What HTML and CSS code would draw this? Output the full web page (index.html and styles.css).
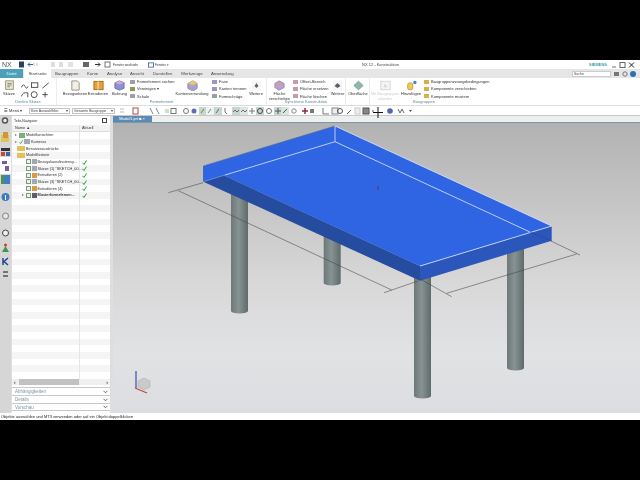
FILE: index.html
```html
<!DOCTYPE html>
<html lang="de">
<head>
    <meta charset="UTF-8" />
    <title>NX 12 - Konstruktion</title>
    <link rel="stylesheet" href="styles.css">
</head>
<body>
    <svg class="defs" width="0" height="0">
        <symbol id="ok" viewBox="0 0 5 5"><path d="M.5 2.800l1.500 1.700 2.500-4" fill="none" stroke="#2f9a3f" stroke-width="1"/></symbol>
        <symbol id="chev" viewBox="0 0 5 4"><path d="M.5 .8l2 2 2-2" fill="none" stroke="#444" stroke-width=".8"/></symbol>
    </svg>
    <div class="app">
        <!-- Titelleiste -->
        <div class="titlebar">
            <span class="nx">NX</span>
            <svg class="quick" width="92" height="9" viewBox="0 0 92 9">
                <rect x="0" y="1.500" width="5" height="6" fill="#2b3f66"/>
                <path d="M9 4.500h5M9 4.500l2-2M9 4.500l2 2" stroke="#35618f" fill="none"/>
                <path d="M15 3v3M18 3v3" stroke="#bbb"/>
                <rect x="32" y="2" width="4" height="5" fill="#dedede"/>
                <rect x="40" y="2" width="4" height="5" fill="#dedede"/>
                <rect x="49" y="2" width="5" height="5" fill="#e2e2e2"/>
                <rect x="64" y="2" width="6" height="5" fill="#666"/>
                <path d="M76 4.500h5M79 2.500l2 2-2 2" stroke="#333" fill="none"/>
                <rect x="86" y="2" width="5" height="5" fill="#fff" stroke="#555" stroke-width=".8"/>
            </svg>
            <span class="title-link switch">Fenster wechseln</span>
            <svg class="win-ico" width="6" height="6" viewBox="0 0 7 7"><rect x=".5" y="1" width="6" height="5" fill="#fff" stroke="#3a6ea5"/></svg>
            <span class="title-link">Fenster ▾</span>
            <span class="app-title">NX 12 - Konstruktion</span>
            <span class="siemens">SIEMENS</span>
            <svg class="win-btns" width="26" height="8" viewBox="0 0 26 8">
                <path d="M1 6h4" stroke="#777"/>
                <rect x="9" y="1.500" width="5" height="5" fill="none" stroke="#666"/>
                <path d="M18 1.500l5 5M23 1.500l-5 5" stroke="#222"/>
            </svg>
        </div>

        <!-- Registerkarten -->
        <div class="tabs">
            <span class="tab tab-file">Datei</span>
            <span class="tab tab-active">Startseite</span>
            <span class="tab tab-a">Baugruppen</span>
            <span class="tab tab-b">Kurve</span>
            <span class="tab tab-c">Analyse</span>
            <span class="tab tab-d">Ansicht</span>
            <span class="tab tab-e">Darstellen</span>
            <span class="tab tab-f">Werkzeuge</span>
            <span class="tab tab-g">Anwendung</span>
            <span class="search">Suche</span>
            <svg class="tab-icons" width="26" height="8" viewBox="0 0 26 8">
                <rect x="1" y="2" width="5" height="4" fill="#777"/>
                <circle cx="12" cy="4" r="2.200" fill="none" stroke="#777"/>
                <circle cx="20" cy="4" r="3" fill="#2f6fb5"/>
            </svg>
        </div>

        <!-- Ribbon -->
        <div class="ribbon">
            <div class="group g-sketch">
                <div class="group-body">
                    <div class="big big-sketch">
                        <svg viewBox="0 0 13 13"><rect x="2" y="1" width="9" height="10" fill="#efe9c9" stroke="#8a8a6a"/><path d="M4 4h5M4 6h5M4 8h3" stroke="#6a7a8a"/></svg>
                        <span>Skizze</span>
                    </div>
                    <svg class="sketch-tools" width="32" height="20" viewBox="0 0 34 22">
                        <path d="M1 7q2-5 4-1t3 0" fill="none" stroke="#444"/>
                        <rect x="12" y="2" width="7" height="5" fill="none" stroke="#444"/>
                        <path d="M24 8l7-6" stroke="#444"/>
                        <path d="M1 17q1-5 7-4v5" fill="none" stroke="#444"/>
                        <circle cx="15" cy="15" r="3.300" fill="none" stroke="#444"/>
                        <path d="M27 12v6M24 15h6" stroke="#444"/>
                    </svg>
                </div>
                <div class="group-name">Direkte Skizze</div>
            </div>

            <div class="group g-feature">
                <div class="group-body">
                    <div class="big w-plane">
                        <svg viewBox="0 0 12 12"><path d="M2 1h6l2 2v8H2z" fill="#f4efe2" stroke="#8d8d8d"/></svg>
                        <span>Bezugsebene</span>
                    </div>
                    <div class="big w-extrude">
                        <svg viewBox="0 0 12 12"><rect x="1" y="1.500" width="10" height="9" fill="#e5a23c" stroke="#a86a16"/><path d="M5.500 1.500v9" stroke="#fff0c8"/></svg>
                        <span>Extrudieren</span>
                    </div>
                    <div class="big w-hole">
                        <svg viewBox="0 0 12 12"><path d="M1 3l5-2 5 2v6l-5 2-5-2z" fill="#8f8fd6" stroke="#6c6ca8"/><path d="M1 3l5 2 5-2-5-2z" fill="#d7a7c7"/></svg>
                        <span>Bohrung</span>
                    </div>
                    <ul class="list l-feature">
                        <li><i class="dot c-gray"></i>Formelement suchen</li>
                        <li><i class="dot c-olive"></i>Vereinigen ▾</li>
                        <li><i class="dot c-gray"></i>Schale</li>
                    </ul>
                    <div class="big w-blend">
                        <svg viewBox="0 0 13 13"><path d="M1 4l6-3 5 3v6l-5 3-6-3z" fill="#a7a2cf" stroke="#8c88aa"/><path d="M1 4l6 2 5-2-5-3z" fill="#f1c85c"/></svg>
                        <span>Kantenverrundung</span>
                    </div>
                    <ul class="list l-edge">
                        <li><i class="dot c-violet"></i>Fase</li>
                        <li><i class="dot c-violet"></i>Kanten trennen</li>
                        <li><i class="dot c-gray"></i>Formschräge</li>
                    </ul>
                    <div class="big w-more">
                        <svg viewBox="0 0 10 11"><rect x=".5" y=".5" width="9" height="10" fill="#f6f6f6"/><path d="M3 6l2-3 2 3-2 2z" fill="#5a6a7a"/></svg>
                        <span>Weitere</span>
                    </div>
                </div>
                <div class="group-name">Formelement</div>
            </div>

            <div class="group g-sync">
                <div class="group-body">
                    <div class="big w-move">
                        <svg viewBox="0 0 13 13"><path d="M1 4l5-3 6 3v5l-6 3-5-3z" fill="#b6a0d8" stroke="#9a86bc"/><path d="M3 5l3-2 3 2-3 2z" fill="#e8a24a"/></svg>
                        <span>Fläche<br>verschieben</span>
                    </div>
                    <ul class="list l-sync">
                        <li><i class="dot c-rose"></i>Offset-Bereich</li>
                        <li><i class="dot c-rose"></i>Fläche ersetzen</li>
                        <li><i class="dot c-rose"></i>Fläche löschen</li>
                    </ul>
                    <div class="big w-more2">
                        <svg viewBox="0 0 10 11"><rect x=".5" y=".5" width="9" height="10" fill="#f6f6f6"/><path d="M2 6l3-3 3 3-3 2z" fill="#5a5a6a"/></svg>
                        <span>Weitere</span>
                    </div>
                </div>
                <div class="group-name">Synchrone Konstruktion</div>
            </div>

            <div class="group g-surface">
                <div class="group-body">
                    <div class="big w-surface">
                        <svg viewBox="0 0 13 12"><path d="M6.500 1l5.500 5-5.500 5L1 6z" fill="#8fb8a6" stroke="#7a9d8e"/></svg>
                        <span>Oberfläche</span>
                    </div>
                </div>
            </div>

            <div class="group g-assy">
                <div class="group-body">
                    <div class="big w-work">
                        <svg viewBox="0 0 13 12"><rect x="1" y="1" width="11" height="10" fill="#f4f4f4" stroke="#d2d2d2"/><path d="M4 8l2-4 3 4z" fill="#d8d8d8"/></svg>
                        <span class="disabled">Mit Baugruppen<br>arbeiten</span>
                    </div>
                    <div class="big w-add">
                        <svg viewBox="0 0 13 12"><rect x="2" y="3" width="6" height="8" rx="2" fill="#efc95c" stroke="#bb9a36"/><circle cx="10.500" cy="2.500" r="2" fill="#4a7fd0"/></svg>
                        <span>Hinzufügen</span>
                    </div>
                    <ul class="list l-assy">
                        <li><i class="dot c-gold"></i>Baugruppenzwangsbedingungen</li>
                        <li><i class="dot c-gold"></i>Komponente verschieben</li>
                        <li><i class="dot c-gold"></i>Komponente mustern</li>
                    </ul>
                </div>
                <div class="group-name name-assy">Baugruppen</div>
            </div>
        </div>

        <!-- Auswahlleiste -->
        <div class="toolbar">
            <span class="menu">☰ Menü ▾</span>
            <span class="select sel-filter">Kein Auswahlfilter <b>▾</b></span>
            <span class="select sel-scope">Gesamte Baugruppe <b>▾</b></span>
            <svg class="tool-strip" width="300" height="10" viewBox="116 105 300 10">
                <path d="M120 108h4M120 111h4" stroke="#bbb"/>
                <rect x="133" y="107" width="5" height="6" fill="#fff" stroke="#b04a4a"/>
                <path d="M150 107l3 6M156 107l3 6" stroke="#888"/>
                <rect x="165" y="108" width="4" height="4" fill="#cfe0c8"/>
                <rect x="171" y="107.500" width="5" height="5" fill="none" stroke="#777"/>
                <circle cx="186" cy="110" r="2.500" fill="none" stroke="#777"/>
                <circle cx="194" cy="110" r="2.500" fill="#5d6fb0"/>
                <rect x="199" y="106" width="7" height="8" fill="#c8d6ce"/>
                <path d="M201 112l3-4" stroke="#6a8a3a"/>
                <rect x="206" y="106" width="8" height="8" fill="#eef2ee"/>
                <path d="M208 112l3-4" stroke="#888"/>
                <rect x="214" y="106" width="8" height="8" fill="#c8d6ce"/>
                <path d="M216 112l3-4" stroke="#4a6a9a"/>
                <path d="M225 107v4l2 2" fill="none" stroke="#777"/>
                <rect x="232" y="106" width="8" height="8" fill="#c8d6ce"/>
                <rect x="240" y="106" width="8" height="8" fill="#dde6e0"/>
                <path d="M233 111l2-2 2 2 2-2M241 111l2-2 2 2 2-2" stroke="#667" fill="none"/>
                <path d="M252 107v6M249 110h6" stroke="#777"/>
                <rect x="256" y="106" width="8" height="8" fill="#c8d6ce"/>
                <circle cx="260" cy="110" r="2.500" fill="none" stroke="#444"/>
                <circle cx="269" cy="110" r="2.500" fill="none" stroke="#777"/>
                <rect x="274" y="106" width="8" height="8" fill="#c8d6ce"/>
                <path d="M278 107v6M275 110h6" stroke="#556"/>
                <rect x="281" y="106" width="8" height="8" fill="#d8e4dc"/>
                <path d="M283 112l4-4" stroke="#3d6f45"/>
                <circle cx="294" cy="110" r="2.200" fill="none" stroke="#888"/>
                <path d="M302 110h6M305 107v6" stroke="#8a2f4a" stroke-width="1.500"/>
                <rect x="310" y="108" width="4" height="4" fill="#777"/>
                <path d="M323 107v6h6" fill="none" stroke="#777"/>
                <rect x="332" y="107" width="6" height="6" fill="#eee" stroke="#888"/>
                <circle cx="340" cy="110" r="2.500" fill="none" stroke="#555"/>
                <path d="M347 113l4-4" stroke="#555"/>
                <rect x="355" y="107" width="5" height="6" fill="#eee" stroke="#ccc"/>
                <rect x="363" y="107" width="6" height="6" fill="#88888a" stroke="#555"/>
                <path d="M372 110h2" stroke="#555"/>
                <circle cx="390" cy="110" r="2.800" fill="#5668a8"/>
                <path d="M398 108l2 4 2-4 2 4" fill="none" stroke="#666"/>
                <path d="M409 109h3l-1.500 2z" fill="#555"/>
            </svg>
            <svg class="cursor" width="12" height="11" viewBox="0 0 12 11"><path d="M6 0v11M1 5.500h10" stroke="#111"/></svg>
        </div>

        <div class="main">
            <!-- Ressourcenleiste -->
            <div class="strip">
                <svg width="11" height="297" viewBox="0 0 11 297">
                    <circle cx="5" cy="4.500" r="2.500" fill="#eee" stroke="#555" stroke-width="1.500"/>
                    <rect x="1" y="19" width="8" height="7" fill="#e4c25a"/><rect x="3" y="16" width="5" height="6" fill="#c99a2f"/>
                    <rect x="1" y="32" width="9" height="3" fill="#333"/><rect x="1" y="36" width="4" height="4" fill="#c94a3a"/><rect x="6" y="36" width="4" height="4" fill="#4a5ea8"/>
                    <rect x="0" y="41" width="11" height="17" fill="#fff"/>
                    <path d="M2 45h5v3H2zM5 50h4v5H5z" fill="#7a5aa0"/>
                    <rect x="1" y="59" width="9" height="9" fill="#4f8f5c"/><rect x="4" y="59" width="6" height="9" fill="#3f7fc0"/>
                    <circle cx="5.500" cy="81" r="4" fill="#3c7cc4"/><path d="M5.500 79v5" stroke="#fff"/>
                    <circle cx="5.500" cy="100" r="3" fill="#dfe6ea" stroke="#888"/>
                    <circle cx="5.500" cy="117" r="3" fill="#eee" stroke="#444"/>
                    <path d="M2 136l3.500-6 3.500 6z" fill="#3e9a4a"/><circle cx="5.500" cy="129" r="1.500" fill="#d63a3a"/>
                    <path d="M3 142v7M8 142l-4 3.500 4 3.500" fill="none" stroke="#23468f" stroke-width="1.500"/>
                    <path d="M3 156h5M8 160H3" stroke="#555" stroke-width="1.500"/>
                </svg>
            </div>

            <!-- Teile-Navigator -->
            <div class="panel">
                <div class="panel-head">
                    <span>Teile-Navigator</span>
                    <svg width="5" height="5" viewBox="0 0 5 5"><rect x=".5" y=".5" width="4" height="4" fill="none" stroke="#444"/></svg>
                </div>
                <div class="cols">
                    <span class="col-name">Name ▲</span>
                    <span class="col-cur">Aktuell</span>
                </div>
                <div class="tree">
                    <div class="row lv1"><i class="arrow"></i><i class="node n-green"></i>Modellansichten</div>
                    <div class="row lv1"><i class="arrow"></i><svg class="tick"><use href="#ok"/></svg><i class="node n-gray"></i>Kameras</div>
                    <div class="row lv0"><i class="node n-folder"></i>Benutzerausdrücke</div>
                    <div class="row lv0"><i class="node n-folder"></i>Modellhistorie</div>
                    <div class="row lv2"><i class="node n-check"></i><i class="node n-gray"></i>Bezugskoordinatensy...<svg class="ok"><use href="#ok"/></svg></div>
                    <div class="row lv2"><i class="node n-check"></i><i class="node n-gray"></i>Skizze (1) "SKETCH_00...<svg class="ok"><use href="#ok"/></svg></div>
                    <div class="row lv2"><i class="node n-check"></i><i class="node n-orange"></i>Extrudieren (2)<svg class="ok"><use href="#ok"/></svg></div>
                    <div class="row lv2"><i class="node n-check"></i><i class="node n-gray"></i>Skizze (3) "SKETCH_00...<svg class="ok"><use href="#ok"/></svg></div>
                    <div class="row lv2"><i class="node n-check"></i><i class="node n-orange"></i>Extrudieren (4)<svg class="ok"><use href="#ok"/></svg></div>
                    <div class="row lv3 bold"><i class="arrow"></i><i class="node n-check"></i><i class="node n-dark"></i>Musterformelemen...<svg class="ok"><use href="#ok"/></svg></div>
                </div>
                <div class="hscroll"><b>‹</b><span class="thumb"></span><b>›</b></div>
                <div class="fold">Abhängigkeiten<svg class="chev"><use href="#chev"/></svg></div>
                <div class="fold">Details<svg class="chev"><use href="#chev"/></svg></div>
                <div class="fold fold-last">Vorschau<svg class="chev"><use href="#chev"/></svg></div>
            </div>

            <!-- Grafikfenster -->
            <div class="view">
                <div class="view-tabs"><span class="view-tab">Model1.prt ■ ×</span></div>
                <svg class="scene" width="527" height="290" viewBox="113 123 527 290">
                    <defs>
                        <linearGradient id="bg" x1="0" y1="0" x2="0" y2="1">
                            <stop offset="0" stop-color="#b2b2b2"/>
                            <stop offset=".55" stop-color="#d8d8d9"/>
                            <stop offset=".8" stop-color="#e1e2e4"/>
                            <stop offset="1" stop-color="#dcdde0"/>
                        </linearGradient>
                        <linearGradient id="leg" x1="0" y1="0" x2="1" y2="0">
                            <stop offset="0" stop-color="#6e7878"/>
                            <stop offset=".45" stop-color="#879292"/>
                            <stop offset="1" stop-color="#5f6a6a"/>
                        </linearGradient>
                    </defs>
                    <rect x="113" y="123" width="527" height="290" fill="url(#bg)"/>

                    <!-- Beine -->
                    <path d="M231 190h17v121a8.500 2.500 0 0 1-17 0z" fill="url(#leg)"/>
                    <path d="M323.700 230h17v53a8.500 2.500 0 0 1-17 0z" fill="url(#leg)"/>
                    <path d="M414 275h17v121a8.500 2.500 0 0 1-17 0z" fill="url(#leg)"/>
                    <path d="M507 235h17v133a8.500 2.500 0 0 1-17 0z" fill="url(#leg)"/>

                    <!-- Platte -->
                    <path d="M335 126L551.700 226L420 266L203.300 166z" fill="#2f64e2"/>
                    <path d="M203.300 166L420 266V280.700L203.300 181.700z" fill="#264c9f"/>
                    <path d="M420 266L551.700 226V240.700L420 280.700z" fill="#2b56bb"/>
                    <path d="M203.300 166V181.700L225 175L203.300 166z" fill="#2f64e2"/>
                    <path d="M335 126L203.300 166" stroke="#5b6e96" stroke-width=".7"/>
                    <path d="M335 126L551.700 226M335 126V141.700M335 141.700L225 175M335 141.700L530 232M420 266L551.700 226" stroke="#dfe7fb" stroke-width=".8" fill="none"/>
                    <path d="M203.300 181.700L225 175" stroke="#8fa8e6" stroke-width=".6"/>
                    <path d="M530 232L551.700 241" stroke="#25449a" stroke-width=".6"/>

                    <!-- Bemassung -->
                    <g stroke="#444" stroke-width=".55" fill="none">
                        <path d="M178.300 190.700L391.700 290"/>
                        <path d="M168.300 192.700L203 182.700"/>
                        <path d="M384 292.700L418 281"/>
                        <path d="M446.700 293.300L576.700 254"/>
                        <path d="M420 279L451.700 296.700"/>
                        <path d="M551 241L580 255"/>
                    </g>
                    <path d="M378 186v4" stroke="#6a2a3a" stroke-width=".8"/>

                    <!-- Koordinatensystem -->
                    <path d="M136 371V388" stroke="#3a4fb0" stroke-width="1.200"/>
                    <path d="M135 388L147 393" stroke="#c8443a" stroke-width="1.200"/>
                    <path d="M138 381l6-3 6 3v6l-6 3-6-3z" fill="#c9cbc9" stroke="#a8aba8" stroke-width=".5"/>
                </svg>
            </div>
        </div>

        <div class="status">Objekte auswählen und MT3 verwenden oder auf ein Objekt doppelklicken</div>
    </div>
</body>
</html>
```

FILE: styles.css
```css
* {
    box-sizing: border-box;
}

body {
    margin: 0;
    height: 480px;
    background-color: #000;
    font-family: "Liberation Sans", Arial, sans-serif;
    overflow: hidden;
}

svg {
    display: block;
    flex: none;
}

.defs {
    position: absolute;
}

.app {
    display: flex;
    flex-direction: column;
    height: 360px;
    margin-top: 60px;
    background-color: #fff;
    color: #333;
    font-size: 4px;
}

/* das Original ist ein unscharfes Video-Standbild */
.titlebar,
.tabs,
.ribbon,
.toolbar,
.strip,
.panel,
.status {
    filter: blur(.2px);
}

/* Titelleiste */
.titlebar {
    display: flex;
    align-items: center;
    height: 9px;
    padding-left: 2px;
    background-color: #fff;
    font-size: 3.200px;
    white-space: nowrap;
}

.nx {
    width: 15px;
    font-size: 7px;
    color: #46586a;
}

.quick {
    margin-left: 2px;
    margin-right: 2px;
}

.title-link {
    color: #333;
}

.switch {
    margin-right: 10px;
}

.win-ico {
    margin-right: 1px;
}

.app-title {
    position: absolute;
    left: 362px;
    color: #444;
    font-size: 4px;
}

.siemens {
    margin-left: auto;
    margin-right: 4px;
    font-size: 4px;
    font-weight: bold;
    color: #3b9ca5;
}

.win-btns {
    margin-right: 3px;
}

/* Registerkarten */
.tabs {
    display: flex;
    align-items: center;
    height: 9px;
    background-color: #e6e6e6;
    font-size: 4.300px;
    color: #444;
}

.tab {
    display: block;
    height: 9px;
    line-height: 9px;
    white-space: nowrap;
}

.tab-file {
    width: 23px;
    background-color: #4e9fb8;
    color: #dff;
    text-align: center;
}

.tab-active {
    width: 27px;
    margin-left: 1px;
    background-color: #fff;
    text-align: center;
}

.tab-a { margin-left: 4px; width: 32px; }
.tab-b { width: 20px; }
.tab-c { width: 23px; }
.tab-d { width: 23px; }
.tab-e { width: 28px; }
.tab-f { width: 30px; }
.tab-g { width: 30px; }

.search {
    width: 39px;
    height: 6px;
    margin-left: auto;
    margin-right: 2px;
    padding-left: 1px;
    background-color: #fff;
    border: 1px solid #ccc;
    font-size: 3.500px;
    line-height: 4px;
}

.tab-icons {
    margin-right: 1px;
}

/* Ribbon */
.ribbon {
    display: flex;
    height: 28px;
    background-color: #fff;
    border-bottom: 1px solid #ddd;
}

.group {
    display: flex;
    flex-direction: column;
    border-right: 1px solid #ececec;
}

.group-body {
    display: flex;
    flex: 1;
    min-height: 0;
    padding-top: 2px;
}

.group-name {
    height: 5px;
    margin-bottom: 1px;
    font-size: 4px;
    line-height: 5px;
    text-align: center;
    color: #5d8a9a;
}

.name-assy {
    padding-right: 12px;
}

.g-sketch { width: 57px; }
.g-feature { width: 210px; }
.g-sync { width: 79px; }
.g-surface { width: 24px; }
.g-assy { width: 120px; border-right: 0; }

.big {
    display: flex;
    flex-direction: column;
    align-items: center;
    flex: none;
    gap: 1px;
    font-size: 4px;
    line-height: 4.500px;
    text-align: center;
    white-space: nowrap;
    color: #333;
}

.big svg {
    width: 11px;
    height: 11px;
}

.big-sketch { width: 18px; }
.sketch-tools { margin-left: 2px; margin-top: 1px; }
.w-plane { width: 24px; margin-left: 6px; }
.w-extrude { width: 22px; }
.w-hole { width: 21px; }
.w-blend { width: 32px; }
.w-more { width: 16px; }
.w-move { width: 25px; }
.w-more2 { width: 17px; }
.w-surface { width: 24px; }
.w-work { width: 30px; }
.w-add { width: 22px; }

.disabled {
    color: #cfcfcf;
}

.list {
    display: flex;
    flex-direction: column;
    flex: none;
    gap: 2.300px;
    margin: -1px 0 0;
    padding: 0;
    list-style: none;
    font-size: 4px;
    line-height: 5px;
    white-space: nowrap;
    color: #333;
}

.l-feature { width: 46px; }
.l-edge { width: 36px; margin-left: 4px; }
.l-sync { width: 36px; margin-left: 1px; }
.l-assy { margin-left: 2px; }

.dot {
    display: inline-block;
    width: 5px;
    height: 4px;
    margin-right: 2px;
    vertical-align: -.5px;
}

.c-gray { background-color: #9a9fa8; }
.c-olive { background-color: #8c9a56; }
.c-violet { background-color: #9a96c0; }
.c-rose { background-color: #c89aa8; }
.c-gold { background-color: #d8b04a; }

/* Auswahlleiste */
.toolbar {
    display: flex;
    align-items: center;
    position: relative;
    height: 10px;
    padding-left: 4px;
    background-color: #fff;
    border-bottom: 1px solid #c9c9c9;
}

.menu {
    width: 25px;
    font-size: 4px;
    white-space: nowrap;
    color: #333;
}

.select {
    display: flex;
    justify-content: space-between;
    height: 6px;
    padding: 0 1px;
    border: 1px solid #c4c4c4;
    font-size: 3.500px;
    line-height: 4px;
    white-space: nowrap;
    color: #444;
}

.select b {
    font-weight: normal;
}

.sel-filter { width: 41px; }
.sel-scope { width: 43px; margin-left: 2px; }

.tool-strip {
    margin-left: 1px;
}

.cursor {
    position: absolute;
    left: 372px;
    top: 1px;
    z-index: 3;
}

/* Hauptbereich */
.main {
    display: flex;
    flex: 1;
    min-height: 0;
    background-color: #dcdee0;
}

.strip {
    width: 11px;
    background-color: #d6d6d6;
}

.panel {
    display: flex;
    flex-direction: column;
    width: 98px;
    margin-left: 1px;
    margin-right: 3px;
    padding-bottom: 2px;
    background-color: #fff;
    font-size: 3.800px;
    color: #333;
}

.panel-head {
    display: flex;
    justify-content: space-between;
    align-items: center;
    height: 9px;
    padding: 0 3px 0 2px;
    font-size: 3.500px;
}

.cols {
    display: flex;
    height: 7px;
    line-height: 6px;
    background-color: #f2f2f2;
    border-bottom: 1px solid #ddd;
}

.col-name {
    width: 68px;
    padding-left: 3px;
    border-right: 1px solid #ddd;
}

.col-cur {
    padding-left: 2px;
}

.tree {
    flex: 1;
    min-height: 0;
    background-image:
        linear-gradient(#e6e6e6, #e6e6e6),
        repeating-linear-gradient(#fff 0, #fff 6.670px, #f5f5f5 6.670px, #f5f5f5 13.340px);
    background-size: 1px 100%, 100% 100%;
    background-position: 67px 0, 0 0;
    background-repeat: no-repeat;
}

.row {
    display: flex;
    align-items: center;
    position: relative;
    height: 6.670px;
    white-space: nowrap;
}

.lv0 { padding-left: 5px; }
.lv1 { padding-left: 3px; }
.lv2 { padding-left: 14px; }
.lv3 { padding-left: 10px; }

.lv0 .node {
    width: 8px;
    height: 5px;
}

.lv1 > .node {
    width: 6px;
}

.bold {
    font-weight: bold;
}

.arrow {
    flex: none;
    width: 4px;
    height: 0;
    border-left: 2px solid #777;
    border-top: 1px solid transparent;
    border-bottom: 1px solid transparent;
    background-clip: padding-box;
}

.node {
    flex: none;
    width: 5px;
    height: 5px;
    margin-right: 1px;
}

.n-green { background-color: #7eb07e; }
.n-gray { background-color: #a0aab0; }
.n-folder { background-color: #e2c25c; }
.n-orange { background-color: #d89a48; }
.n-dark { background-color: #5a6068; }

.n-check {
    margin-right: .5px;
    background-color: #eef2ee;
    border: 1px solid #7a9a7a;
}

.tick {
    width: 4px;
    height: 4px;
    margin-right: 1px;
}

.ok {
    position: absolute;
    left: 70px;
    top: 1px;
    width: 5px;
    height: 5px;
}

.hscroll {
    display: flex;
    align-items: center;
    height: 6px;
    margin-bottom: 2px;
    padding: 0 2px;
    background-color: #f0f0f0;
    font-size: 5px;
}

.hscroll b:last-child {
    margin-left: auto;
}

.thumb {
    width: 60px;
    height: 6px;
    margin-left: 3px;
    background-color: #c2c2c2;
}

.fold {
    display: flex;
    justify-content: space-between;
    align-items: center;
    height: 8px;
    padding: 0 2px 0 3px;
    border-top: 1px solid #c8c8c8;
    font-size: 4.500px;
    color: #7a95a8;
}

.fold-last {
    border-bottom: 1px solid #c8c8c8;
}

.chev {
    width: 5px;
    height: 4px;
}

/* Grafikfenster */
.view {
    display: flex;
    flex-direction: column;
    flex: 1;
    min-width: 0;
}

.view-tabs {
    height: 7px;
    background-color: #eef0f0;
    border-bottom: 1px solid #7c98a6;
}

.view-tab {
    display: block;
    width: 39px;
    height: 6px;
    padding-left: 6px;
    background-color: #5a8bb5;
    color: #fff;
    font-size: 4px;
    line-height: 6px;
    white-space: nowrap;
}

.status {
    flex: none;
    height: 7px;
    padding-left: 1px;
    background-color: #fff;
    color: #222;
    font-size: 4px;
    line-height: 7px;
    white-space: nowrap;
}
```
